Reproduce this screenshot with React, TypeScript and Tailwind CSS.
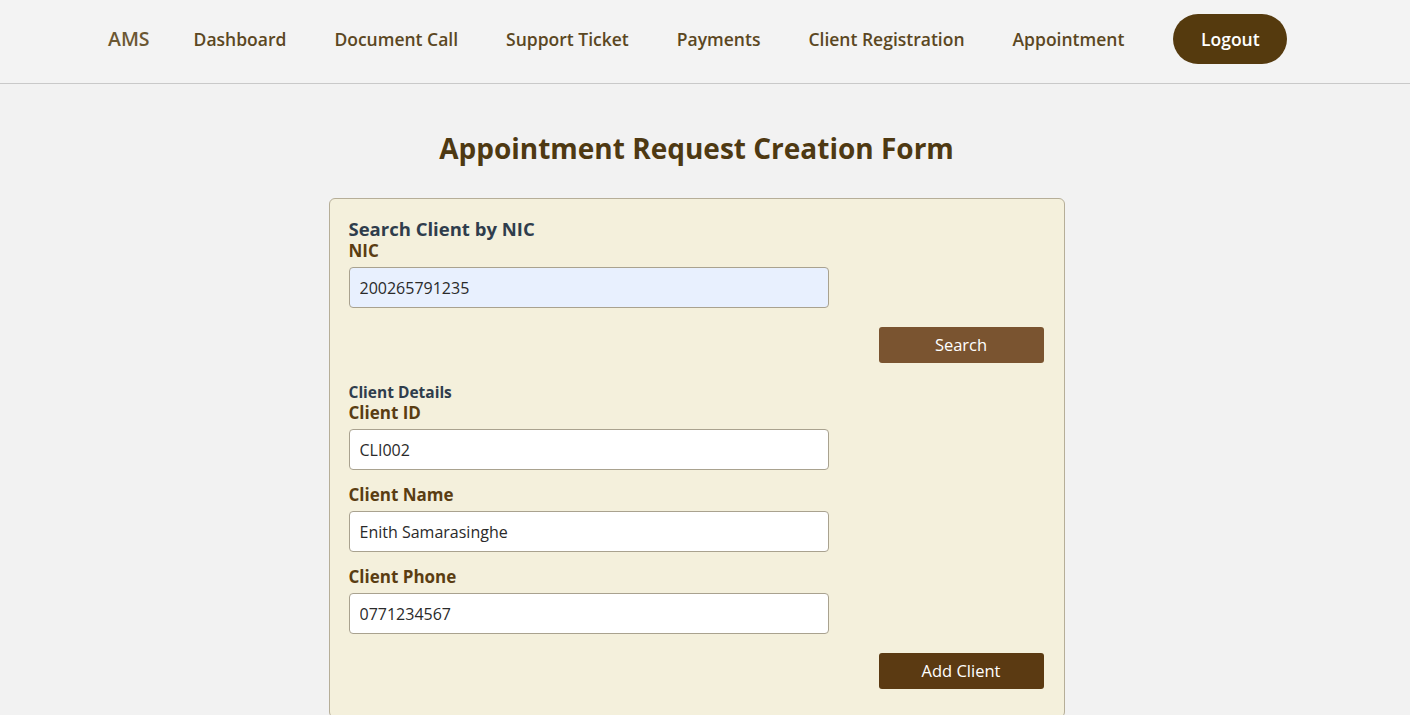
const navLinks = [
  "Dashboard",
  "Document Call",
  "Support Ticket",
  "Payments",
  "Client Registration",
  "Appointment",
];

function Field({ label, value, autofill }: { label: string; value: string; autofill?: boolean }) {
  return (
    <div className="flex flex-col">
      <label className="text-[17px] leading-[22px] font-bold text-[#5a3d12]">{label}</label>
      <input
        readOnly
        value={value}
        className={
          "mt-[5px] w-[480px] h-[41px] rounded-[4px] border border-[#a9a28f] px-[10px] text-[16px] text-[#2a2a2a] outline-none " +
          (autofill ? "bg-[#e8f0fe]" : "bg-white")
        }
      />
    </div>
  );
}

export default function App() {
  return (
    <div
      className="min-h-[715px] bg-[#f2f2f2]"
      style={{ fontFamily: "'Open Sans', 'Noto Sans', sans-serif" }}
    >
      {/* Top nav */}
      <header className="h-[84px] border-b border-[#c9c9c9] bg-[#f3f3f3]">
        <nav className="h-full flex items-center pl-[108px] pb-[5px]">
          <span className="text-[19.5px] font-semibold text-[#6b5732] mr-[44px]">AMS</span>
          <div className="flex items-center gap-[48px]">
            {navLinks.map((l) => (
              <a key={l} className="text-[17.5px] font-semibold text-[#5b4722]">
                {l}
              </a>
            ))}
          </div>
          <button className="ml-[49px] w-[114px] h-[50px] rounded-full bg-[#553a0e] text-white text-[17.5px] font-semibold">
            Logout
          </button>
        </nav>
      </header>

      <main className="flex flex-col items-center pr-[17px]">
        <h1 className="mt-[46px] text-[28px] leading-[36px] font-bold text-[#4e3912]">
          Appointment Request Creation Form
        </h1>

        <section className="mt-[32px] w-[736px] h-[520px] rounded-[6px] border border-[#b6ae98] bg-[#f4f0dc] pl-[19px] pr-[20px] pt-[19px]">
          <h2 className="text-[18.5px] leading-[22px] font-bold text-[#2f3d4c]">Search Client by NIC</h2>
          <Field label="NIC" value="200265791235" autofill />
          <div className="flex justify-end mt-[19px]">
            <button className="w-[165px] h-[36px] rounded-[3px] bg-[#7a5430] text-white text-[16.5px]">
              Search
            </button>
          </div>

          <h3 className="mt-[19px] text-[15.5px] leading-[20px] font-bold text-[#2f3d4c]">Client Details</h3>
          <div className="flex flex-col gap-[14px]">
            <Field label="Client ID" value="CLI002" />
            <Field label="Client Name" value="Enith Samarasinghe" />
            <Field label="Client Phone" value="0771234567" />
          </div>
          <div className="flex justify-end mt-[19px]">
            <button className="w-[165px] h-[36px] rounded-[3px] bg-[#5b3a12] text-white text-[16.5px]">
              Add Client
            </button>
          </div>
        </section>
      </main>
    </div>
  );
}
